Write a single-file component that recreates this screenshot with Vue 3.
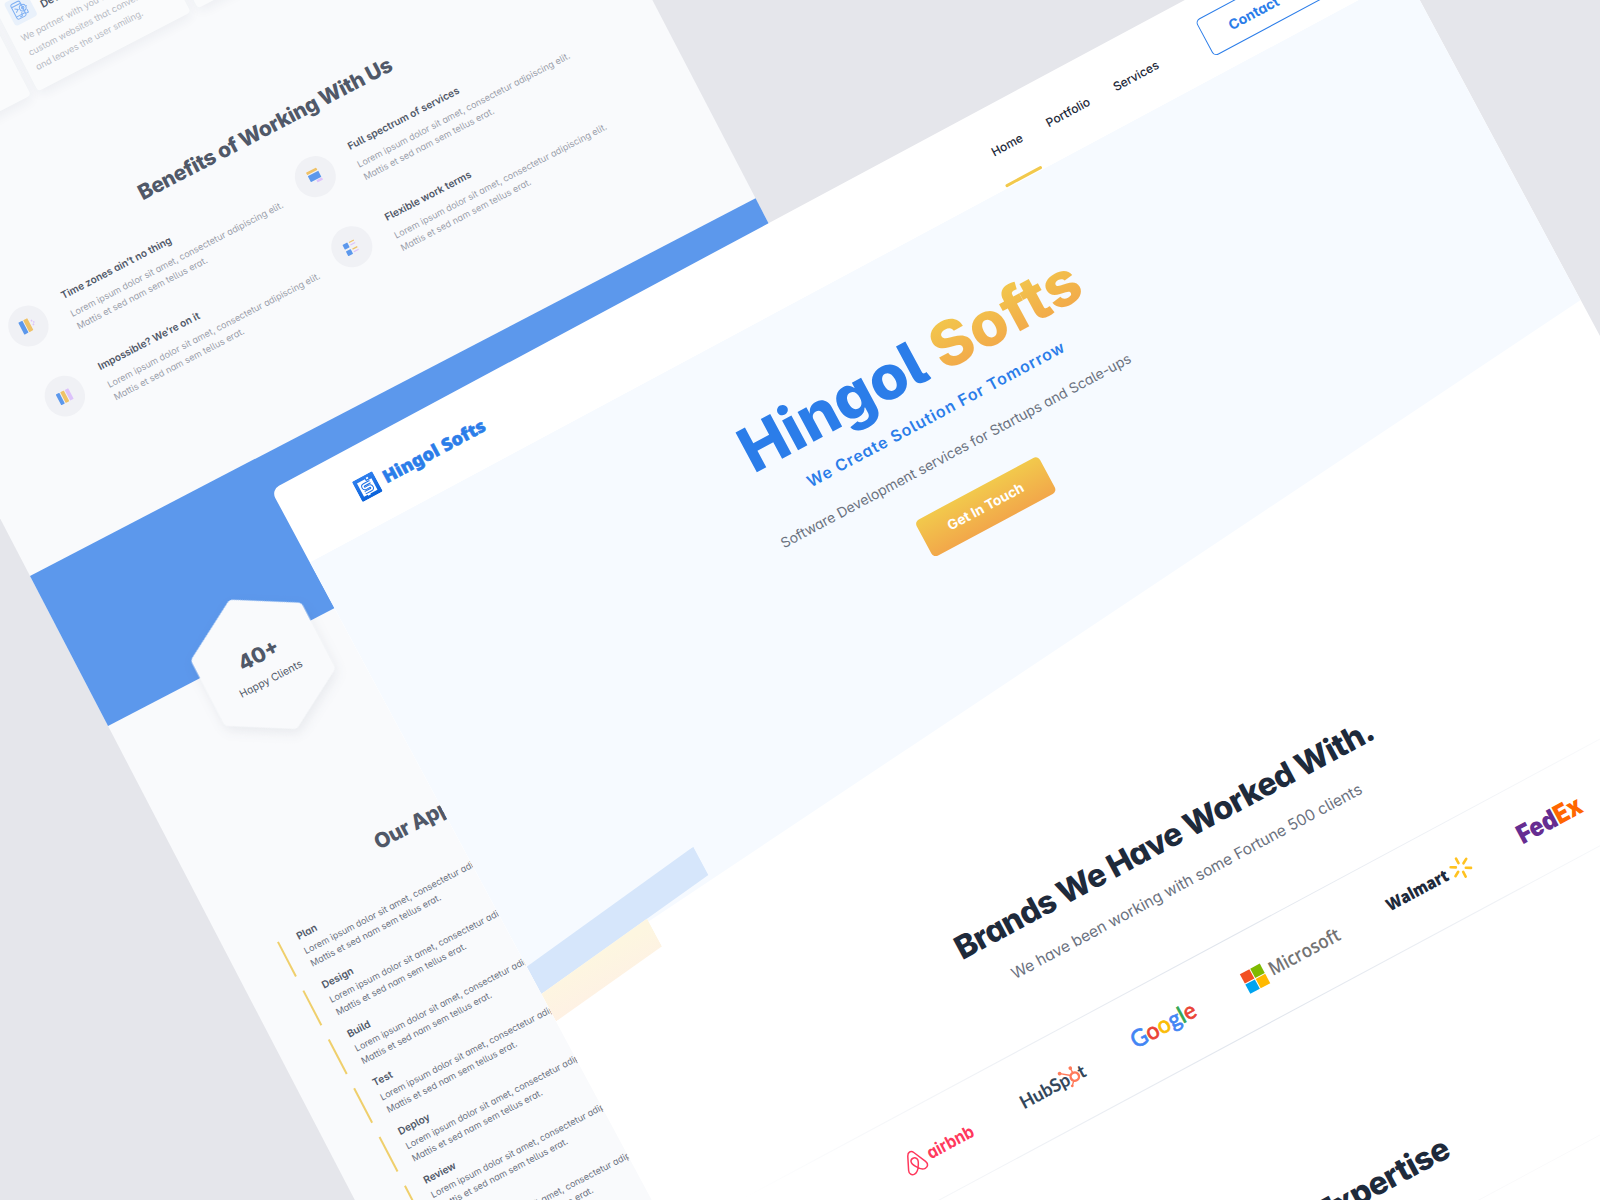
<script setup>
const copy = ['Lorem ipsum dolor sit amet, consectetur adipiscing elit.', 'Mattis et sed nam sem tellus erat.']

const benefits = [
  { title: 'Time zones ain’t no thing', icon: 'columns' },
  { title: 'Full spectrum of services', icon: 'stack' },
  { title: 'Impossible? We’re on it', icon: 'stripes' },
  { title: 'Flexible work terms', icon: 'list' },
]

const steps = ['Plan', 'Design', 'Build', 'Test', 'Deploy', 'Review', 'Launch']
const nav = ['Home', 'Portfolio', 'Services']
const rays = [0, 60, 120, 180, 240, 300]
</script>

<template>
  <div class="stage">
    <div class="page back">
      <section class="cards">
        <article class="card"></article>
        <article class="card">
          <div class="card-head">
            <span class="tile">
              <svg width="18" height="20" viewBox="0 0 18 20" fill="none" stroke="#7fb0f3" stroke-width="1">
                <rect x="2" y="1.5" width="10" height="16.5" rx="2" />
                <path d="M2 4.5h10M2 15h10M4 7l3 2-3 2M5.5 16.6h3" />
                <circle cx="12" cy="9.5" r="3.3" />
                <circle cx="12" cy="9.5" r="1.2" />
                <path d="M9 13l-1 3M15 13v3h-3M12 5v1M16.5 9.5h-1" />
              </svg>
            </span>
            <h4>Development</h4>
          </div>
          <p>We partner with you to create<br />custom websites that convert<br />and leaves the user smiling.</p>
        </article>
        <article class="card"></article>
        <article class="card"></article>
      </section>

      <h2 class="back-title benefits-title">Benefits of Working With Us</h2>
      <section class="benefits">
        <div v-for="b in benefits" :key="b.title" class="benefit">
          <span class="disc">
            <svg width="18" height="18" viewBox="0 0 18 18">
              <g v-if="b.icon === 'columns'">
                <rect x="1.5" y="2" width="4.6" height="13.4" rx=".6" fill="#5c98ec" />
                <rect x="7" y="2" width="4.6" height="13.4" rx=".6" fill="#efc268" />
                <path d="M13.6 6.2h1.4M15 8.4h1.4M13.4 10.4h1.6" stroke="#dcc2fb" stroke-width="1.6" />
              </g>
              <g v-else-if="b.icon === 'stack'">
                <rect x="3" y="1.8" width="11.4" height="2.7" rx=".4" fill="#efc268" />
                <rect x="3" y="5.6" width="11.8" height="6.8" rx=".4" fill="#5c98ec" />
                <rect x="8.8" y="13.2" width="6.2" height="2.4" rx=".4" fill="#dcc2fb" />
              </g>
              <g v-else-if="b.icon === 'stripes'">
                <rect x="1.6" y="3" width="4" height="12" rx=".6" fill="#5c98ec" />
                <rect x="6.6" y="3" width="4" height="12" rx=".6" fill="#efc268" />
                <rect x="11.6" y="3" width="4" height="12" rx=".6" fill="#dcc2fb" />
              </g>
              <g v-else>
                <rect x="2" y="2.6" width="5.4" height="5.4" rx=".6" fill="#5c98ec" />
                <rect x="2" y="10" width="5.4" height="5.4" rx=".6" fill="#5c98ec" />
                <path d="M9 3.5h5.4M9 11h5.4" stroke="#efc268" stroke-width="1.2" />
                <path d="M9 6.4h5.4M9 13.9h5.4" stroke="#dcc2fb" stroke-width="1.2" />
              </g>
            </svg>
          </span>
          <div>
            <h5>{{ b.title }}</h5>
            <p>{{ copy[0] }}<br />{{ copy[1] }}</p>
          </div>
        </div>
      </section>

      <section class="band">
        <div class="hex">
          <svg width="170" height="190" viewBox="-85 -95 170 190">
            <polygon points="0,-66 56.4,-33.5 56.4,33.5 0,66 -56.4,33.5 -56.4,-33.5" />
          </svg>
          <strong>40+</strong>
          <span>Happy Clients</span>
        </div>
      </section>

      <h2 class="back-title approach-title">Our Approach</h2>
      <section class="steps">
        <div v-for="s in steps" :key="s" class="step">
          <h6>{{ s }}</h6>
          <p>{{ copy[0] }}<br />{{ copy[1] }}</p>
        </div>
      </section>
    </div>

    <div class="page front">
      <header class="bar">
        <div class="logo">
          <svg width="23" height="23" viewBox="0 0 23 23">
            <defs>
              <linearGradient id="mark" x1="0" y1="0" x2="0" y2="1">
                <stop offset="0" stop-color="#2f7fee" />
                <stop offset="1" stop-color="#0a62da" />
              </linearGradient>
            </defs>
            <rect width="23" height="23" rx="1.4" fill="url(#mark)" />
            <path d="M3.8 4h9v2.2h6.2V19h-8v1H8v-1H3.8z" fill="#fff" />
            <path d="M16.2 8.4H9.4a1.9 1.9 0 0 0 0 3.8h4a1.9 1.9 0 0 1 0 3.8H6.8" fill="none" stroke="#1b6fe4" stroke-width="3.5" />
            <path d="M16.2 8.4H9.4a1.9 1.9 0 0 0 0 3.8h4a1.9 1.9 0 0 1 0 3.8H6.8" fill="none" stroke="#fff" stroke-width="1.6" />
            <path d="M14.2 3.9h2.2" stroke="#fff" stroke-width="1.8" />
          </svg>
          <svg class="wordmark" width="116" height="24" viewBox="0 0 116 24">
            <text x="0" y="18" textLength="114" lengthAdjust="spacingAndGlyphs">Hingol Softs</text>
          </svg>
        </div>
        <nav>
          <a v-for="(n, i) in nav" :key="n" :class="{ active: i === 0 }">{{ n }}</a>
        </nav>
        <a class="contact">Contact</a>
      </header>

      <section class="hero">
        <i class="stripe blue"></i>
        <i class="stripe sand"></i>
        <h1>Hingol <span>Softs</span></h1>
        <h3>We Create Solution For Tomorrow</h3>
        <p>Software Development services for Startups and Scale-ups</p>
        <a class="cta">Get In Touch</a>
      </section>

      <section class="brands">
        <h2>Brands We Have Worked With.</h2>
        <p>We have been working with some Fortune 500 clients</p>
        <div class="strip">
          <svg width="73" height="30" viewBox="0 0 73 30">
            <path transform="translate(-3.8 .4)" d="M10.8 4.8c-1.9 0-2.8 1.2-3.6 2.8L1.2 20.6c-1.5 3.4.4 6 3.5 6 2.8 0 5-2.4 6.1-4 2.4-3.4 3.5-5.4 3.5-7.3 0-2-1.5-3.4-3.5-3.4s-3.5 1.4-3.5 3.4c0 1.9 1.1 3.9 3.5 7.3 1.1 1.6 3.3 4 6.1 4 3.1 0 5-2.6 3.5-6L14.4 7.6c-.8-1.6-1.7-2.8-3.6-2.8z" fill="none" stroke="#ff385c" stroke-width="1.5" />
            <text class="airbnb" x="22" y="21.8" textLength="51" lengthAdjust="spacingAndGlyphs">airbnb</text>
          </svg>
          <svg width="71" height="30" viewBox="0 0 71 30">
            <text class="hubspot" x="-1.2" y="21.8" textLength="54.4" lengthAdjust="spacingAndGlyphs">HubSp</text>
            <text class="hubspot" x="64" y="21.8">t</text>
            <g stroke="#ff7a59" fill="#ff7a59">
              <circle cx="59.2" cy="16.8" r="4.2" fill="none" stroke-width="2.4" />
              <path d="M56.2 14L47.6 7.2M59.2 12.8V7.6M56.2 20l-3.4 3.6" stroke-width="1.4" />
              <circle cx="47.2" cy="7" r="1.9" stroke="none" />
              <circle cx="59.2" cy="7.2" r="1.8" stroke="none" />
              <circle cx="52.6" cy="23.8" r="1.4" stroke="none" />
            </g>
          </svg>
          <svg width="70" height="30" viewBox="0 0 70 30">
            <text class="google" x="-1" y="21.2" textLength="71" lengthAdjust="spacingAndGlyphs"><tspan fill="#4285f4" stroke="#4285f4">G</tspan><tspan fill="#ea4335" stroke="#ea4335">o</tspan><tspan fill="#fbbc05" stroke="#fbbc05">o</tspan><tspan fill="#4285f4" stroke="#4285f4">g</tspan><tspan fill="#34a853" stroke="#34a853">l</tspan><tspan fill="#ea4335" stroke="#ea4335">e</tspan></text>
          </svg>
          <svg width="106" height="30" viewBox="0 0 106 30">
            <rect x="0" y="4.6" width="10.8" height="10.6" fill="#f25022" />
            <rect x="11.8" y="4.6" width="10.8" height="10.6" fill="#7fba00" />
            <rect x="0" y="16.2" width="10.8" height="10.6" fill="#00a4ef" />
            <rect x="11.8" y="16.2" width="10.8" height="10.6" fill="#ffb900" />
            <text class="microsoft" x="28.2" y="21.8" textLength="78.4" lengthAdjust="spacingAndGlyphs">Microsoft</text>
          </svg>
          <svg width="94" height="30" viewBox="0 0 94 30">
            <text class="walmart" x="0" y="20.4" textLength="68" lengthAdjust="spacingAndGlyphs">Walmart</text>
            <g transform="translate(83.2 15)" stroke="#ffc220" stroke-width="2.6" stroke-linecap="round">
              <line v-for="r in rays" :key="r" x1="0" y1="-5" x2="0" y2="-10.2" :transform="`rotate(${r})`" />
            </g>
          </svg>
          <svg width="68" height="30" viewBox="0 0 68 30">
            <text class="fedex" x="-1.4" y="23.8" textLength="70" lengthAdjust="spacingAndGlyphs"><tspan fill="#662d91">Fed</tspan><tspan fill="#ff6600">Ex</tspan></text>
          </svg>
        </div>
      </section>

      <section class="expertise">
        <h2>Our Expertise</h2>
        <div class="panel"></div>
      </section>
    </div>
  </div>
</template>

<style>
body {
  margin: 0;
  overflow: hidden;
}
</style>

<style scoped>
.stage {
  position: relative;
  width: 1600px;
  height: 1200px;
  overflow: hidden;
  background: #e5e6eb;
  font-family: Inter, "Liberation Sans", sans-serif;
  font-feature-settings: "cv05", "cv11";
}

h1, h2, h3, h4, h5, h6, p {
  margin: 0;
}

/* Tilted sheets on the canvas */
.page {
  position: absolute;
  transform-origin: 0 0;
}

.back {
  left: 30px;
  top: 575.5px;
  width: 817.5px;
  height: 1500px;
  background: #f9fafc;
  color: #505868;
  transform: rotate(-27.5deg) translateY(-560px);
}

.cards {
  display: flex;
  gap: 8px;
  padding: 29.5px 0 0 50.5px;
}

.card {
  box-sizing: border-box;
  width: 172px;
  height: 104px;
  padding: 10.5px 0 0 10px;
  border-radius: 4px;
  background: #fafbfc;
  box-shadow: 0 4px 12px rgba(40, 50, 80, 0.06);
}

.card-head {
  display: flex;
  align-items: center;
  gap: 8px;
}

.tile {
  display: flex;
  align-items: center;
  justify-content: center;
  width: 25px;
  height: 26px;
  border-radius: 3px;
  background: #e9f1fb;
}

.card h4 {
  font-size: 10.5px;
  font-weight: 600;
  line-height: 14px;
  margin-top: 12px;
}

.card p {
  margin-top: 5.5px;
  color: #b6bac3;
  font-size: 9px;
  line-height: 16.4px;
  white-space: nowrap;
}

.back-title {
  font-size: 21px;
  font-weight: 800;
  line-height: 26px;
  letter-spacing: -0.36px;
  white-space: nowrap;
}

.benefits-title {
  margin-top: 125.8px;
  padding-left: 273.5px;
}

.benefits {
  display: grid;
  grid-template-columns: 323.3px 323.3px;
  grid-auto-rows: 79.4px;
  margin-top: 31.6px;
  padding-left: 93.5px;
}

.benefit {
  display: flex;
  align-items: flex-start;
  gap: 23px;
}

.disc {
  display: flex;
  flex: none;
  align-items: center;
  justify-content: center;
  width: 40.8px;
  height: 40.8px;
  border-radius: 50%;
  background: #f0f1f5;
}

.benefit h5 {
  padding-top: 1.4px;
  font-size: 10.15px;
  font-weight: 600;
  line-height: 16px;
  white-space: nowrap;
}

.benefit p {
  margin-top: 6px;
  color: #9a9eaa;
  font-size: 9.08px;
  line-height: 14px;
  white-space: nowrap;
}

.band {
  height: 169px;
  margin-top: 84.6px;
  background: #5c98ec;
}

.hex {
  position: relative;
  top: 90.5px;
  left: 81.2px;
  display: flex;
  flex-direction: column;
  align-items: center;
  justify-content: center;
  width: 170px;
  height: 190px;
}

.hex svg {
  position: absolute;
  inset: 0;
  filter: drop-shadow(0 5px 6px rgba(40, 50, 80, 0.08));
}

.hex polygon {
  fill: #f9fafc;
  stroke: #f9fafc;
  stroke-width: 12;
  stroke-linejoin: round;
}

.hex strong {
  position: relative;
  margin-top: 2px;
  font-size: 21px;
  font-weight: 800;
  line-height: 26px;
}

.hex span {
  position: relative;
  margin-top: 7px;
  font-size: 10.4px;
  line-height: 14px;
}

.approach-title {
  margin-top: 214.7px;
  padding-left: 182.8px;
}

.steps {
  display: flex;
  flex-direction: column;
  gap: 16px;
  margin-top: 29.4px;
  padding-left: 50.2px;
}

.step {
  box-sizing: border-box;
  height: 39px;
  padding-left: 18px;
  border-left: 2px solid #efcf6c;
  white-space: nowrap;
}

.step h6 {
  margin-top: -3px;
  font-size: 10.15px;
  font-weight: 600;
  line-height: 14px;
}

.step p {
  margin-top: 3px;
  color: #6a7180;
  font-size: 9.08px;
  line-height: 13.8px;
}

/* Front sheet */
.front {
  left: 270.5px;
  top: 489.6px;
  width: 1244px;
  height: 1500px;
  border-radius: 9px;
  background: #fff;
  color: #1e2a3b;
  transform: rotate(-28.2deg);
}

.bar {
  box-sizing: border-box;
  display: flex;
  align-items: center;
  height: 82px;
  padding: 5px 79px 0 75px;
}

.logo {
  display: flex;
  align-items: center;
  gap: 7px;
  margin-top: -2px;
}

.wordmark text {
  fill: #2b7de9;
  stroke: #2b7de9;
  stroke-width: 0.5px;
  font-family: "Noto Sans", sans-serif;
  font-size: 17.6px;
  font-weight: 900;
}

nav {
  display: flex;
  gap: 28px;
  margin-left: auto;
  font-size: 12px;
  font-weight: 500;
  line-height: 20px;
  font-feature-settings: "cv11";
}

nav a {
  position: relative;
}

nav .active::after {
  content: "";
  position: absolute;
  left: -3.5px;
  top: 44.8px;
  width: 41px;
  height: 3px;
  border-radius: 2px;
  background: #f2c94c;
}

.contact {
  box-sizing: border-box;
  width: 129px;
  height: 41px;
  margin-left: 53px;
  padding-left: 27px;
  border: 1px solid #2b7de9;
  border-radius: 5px;
  color: #2b7de9;
  font-size: 14px;
  font-weight: 700;
  line-height: 39px;
}

.hero {
  position: relative;
  display: flex;
  flex-direction: column;
  align-items: center;
  box-sizing: border-box;
  height: 521px;
  padding-top: 71.8px;
}

.hero::before {
  content: "";
  position: absolute;
  inset: 0;
  background: #f6faff;
  clip-path: polygon(0 0, 100% 0, 100% 369.5px, 0 489px);
}

.hero > * {
  position: relative;
}

.hero .stripe {
  position: absolute;
  left: 0;
  top: 432px;
}

.blue {
  width: 203.5px;
  height: 58px;
  background: #d6e6fb;
  clip-path: polygon(0 27px, 100% 0, 100% 32px, 0 58px);
}

.sand {
  width: 129px;
  height: 89px;
  background: linear-gradient(#fdf6e0 50px, #fef1e4 89px);
  clip-path: polygon(0 58px, 100% 41.5px, 100% 73px, 0 89px);
}

.hero h1 {
  color: #2b7de9;
  font-size: 62px;
  font-weight: 800;
  line-height: 76px;
  letter-spacing: 0.15px;
  white-space: nowrap;
}

.hero h1 span {
  background: linear-gradient(#f2c94c 10%, #f2a54a 95%);
  background-clip: text;
  -webkit-background-clip: text;
  color: transparent;
}

.hero h3 {
  margin-top: 7.3px;
  color: #2b7de9;
  font-size: 16px;
  font-weight: 600;
  line-height: 20px;
  letter-spacing: 0.95px;
}

.hero p {
  margin-top: 22px;
  color: #6b7280;
  font-size: 14px;
  line-height: 20px;
}

.cta {
  width: 140px;
  height: 41px;
  margin-top: 33px;
  border-radius: 5px;
  background: linear-gradient(#f2c94c, #f2a74a);
  color: #fff;
  font-size: 13.8px;
  font-weight: 700;
  line-height: 41px;
  text-align: center;
}

.brands {
  display: flex;
  flex-direction: column;
  align-items: center;
  padding-top: 107.3px;
}

.brands h2,
.expertise h2 {
  font-size: 32px;
  font-weight: 800;
  line-height: 40px;
  letter-spacing: -0.6px;
  white-space: nowrap;
}

.brands p {
  margin-top: 18px;
  color: #6b7280;
  font-size: 15.55px;
  line-height: 20px;
}

.strip {
  box-sizing: border-box;
  display: flex;
  align-items: center;
  justify-content: center;
  gap: 56px;
  width: 1090px;
  height: 95px;
  margin-top: 59px;
  padding-left: 4px;
  background:
    linear-gradient(90deg, transparent, #dfe4ec 50%, transparent) top / 100% 1px no-repeat,
    linear-gradient(90deg, transparent, #dfe4ec 50%, transparent) bottom / 100% 1px no-repeat;
}

.strip svg {
  overflow: visible;
}

.airbnb {
  fill: #ff385c;
  font-size: 17.5px;
  font-weight: 700;
}

.hubspot {
  fill: #33475b;
  font-family: Lato, sans-serif;
  font-size: 18.5px;
  font-weight: 700;
}

.google {
  font-family: Lato, sans-serif;
  font-size: 23.4px;
  stroke-width: 0.7px;
}

.microsoft {
  fill: #737373;
  font-family: "Open Sans", sans-serif;
  font-size: 19px;
  font-weight: 600;
}

.walmart {
  fill: #1e2a3b;
  font-family: "Open Sans", sans-serif;
  font-size: 17px;
  font-weight: 800;
}

.fedex {
  font-size: 26px;
  font-weight: 900;
}

.expertise {
  padding-top: 171.4px;
  text-align: center;
}

.panel {
  height: 200px;
  margin: 42px 76px 0;
  border-top: 1px solid #fafafb;
}
</style>
